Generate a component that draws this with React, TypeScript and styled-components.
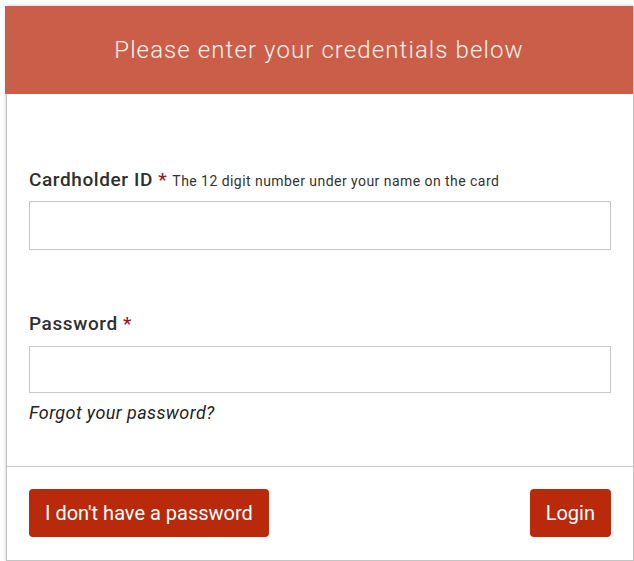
import styled, { createGlobalStyle } from 'styled-components'

const GlobalStyle = createGlobalStyle`
  body {
    margin: 0;
    background: #fff;
    font-family: Roboto, "Liberation Sans", sans-serif;
    overflow: hidden;
  }
`

const Login = () => {
  return (
    <>
      <GlobalStyle />
      <Card>
        <Header>Please enter your credentials below</Header>
        <Body>
          <Field>
            <Label $gap={8}>
              Cardholder ID <Required>*</Required>
              <Hint>The 12 digit number under your name on the card</Hint>
            </Label>
            <Input type="text" $height={49} />
          </Field>
          <Field>
            <Label $gap={10}>
              Password <Required>*</Required>
            </Label>
            <Input type="password" $height={47} />
            <Forgot>Forgot your password?</Forgot>
          </Field>
        </Body>
        <Footer>
          <Button>I don't have a password</Button>
          <Button>Login</Button>
        </Footer>
      </Card>
    </>
  )
}

export default Login

const Card = styled.div`
  margin: 6px 0 0 6px;
  width: 628px;
  box-sizing: border-box;
  border: 1px solid #c4c4c4;
  border-top: none;
  box-shadow: 0 0 3px rgba(0, 0, 0, 0.25);
  background: #fff;
`

const Header = styled.div`
  height: 88px;
  background: #cb5e48;
  color: #fdf3ec;
  font-size: 24px;
  font-weight: 300;
  letter-spacing: 1.1px;
  display: flex;
  align-items: center;
  justify-content: center;
  margin-left: -2px;
`

const Body = styled.div`
  padding: 74px 22px 41px 22px;
  display: flex;
  flex-direction: column;
  gap: 62px;
`

const Field = styled.div`
  display: flex;
  flex-direction: column;
`

const Label = styled.label<{ $gap: number }>`
  font-size: 19px;
  line-height: 24px;
  font-weight: 500;
  color: #2f2f2f;
  letter-spacing: 0.6px;
  margin-bottom: ${(p) => p.$gap}px;
`

const Required = styled.span`
  color: #a3141b;
`

const Hint = styled.span`
  font-size: 14px;
  font-weight: 400;
  color: #333;
  letter-spacing: 0.45px;
  margin-left: 5px;
`

const Input = styled.input<{ $height: number }>`
  height: ${(p) => p.$height}px;
  box-sizing: border-box;
  border: 1px solid #c9c9c9;
  border-radius: 0;
  outline: none;
  font-size: 16px;
  padding: 0 10px;
`

const Forgot = styled.div`
  margin-top: 8px;
  font-size: 18px;
  line-height: 24px;
  font-style: italic;
  color: #222;
  letter-spacing: 0.4px;
`

const Footer = styled.div`
  border-top: 1px solid #c8c8c8;
  padding: 22px 22px 23px 22px;
  display: flex;
  justify-content: space-between;
`

const Button = styled.button`
  height: 48px;
  padding: 0 16px;
  background: #b9290b;
  color: #fff;
  border: none;
  border-radius: 4px;
  font-family: Roboto, "Liberation Sans", sans-serif;
  font-size: 20px;
  cursor: pointer;
`
